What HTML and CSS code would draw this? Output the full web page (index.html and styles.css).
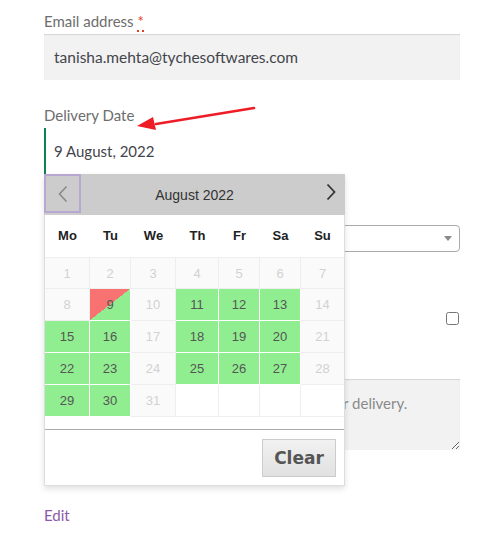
FILE: index.html
```html
<!DOCTYPE html>
<html lang="en">
<head>
    <meta charset="UTF-8">
    <title>Checkout - Delivery Date</title>
    <link rel="stylesheet" href="styles.css">
</head>

<body>
    <!-- checkout billing fields -->
    <form class="checkout">
        <p class="field field-email">
            <label class="field-label" for="email">Email address <abbr class="required" title="required">*</abbr></label>
            <input class="input-text" id="email" type="email" value="tanisha.mehta@tychesoftwares.com">
        </p>

        <div class="field field-date">
            <label class="field-label" for="delivery">Delivery Date</label>
            <input class="input-text input-date" id="delivery" type="text" value="9 August, 2022">

            <!-- datepicker popup -->
            <div class="datepicker">
                <div class="dp-header">
                    <span class="dp-prev">
                        <svg width="10" height="18" viewBox="0 0 10 18"><path d="M8.5 1.5 1.5 9l7 7.5" fill="none" stroke="#8a8a8a" stroke-width="1.6"/></svg>
                    </span>
                    <span class="dp-title">August 2022</span>
                    <span class="dp-next">
                        <svg width="10" height="18" viewBox="0 0 10 18"><path d="M1.5 1.5 8.5 9l-7 7.5" fill="none" stroke="#333" stroke-width="1.8"/></svg>
                    </span>
                </div>
                <div class="dp-grid">
                    <span class="dp-dow">Mo</span>
                    <span class="dp-dow">Tu</span>
                    <span class="dp-dow">We</span>
                    <span class="dp-dow">Th</span>
                    <span class="dp-dow">Fr</span>
                    <span class="dp-dow">Sa</span>
                    <span class="dp-dow">Su</span>

                    <span class="day off">1</span>
                    <span class="day off">2</span>
                    <span class="day off">3</span>
                    <span class="day off">4</span>
                    <span class="day off">5</span>
                    <span class="day off">6</span>
                    <span class="day off">7</span>

                    <span class="day off">8</span>
                    <span class="day booked">9</span>
                    <span class="day off">10</span>
                    <span class="day on">11</span>
                    <span class="day on">12</span>
                    <span class="day on">13</span>
                    <span class="day off">14</span>

                    <span class="day on">15</span>
                    <span class="day on">16</span>
                    <span class="day off">17</span>
                    <span class="day on">18</span>
                    <span class="day on">19</span>
                    <span class="day on">20</span>
                    <span class="day off">21</span>

                    <span class="day on">22</span>
                    <span class="day on">23</span>
                    <span class="day off">24</span>
                    <span class="day on">25</span>
                    <span class="day on">26</span>
                    <span class="day on">27</span>
                    <span class="day off">28</span>

                    <span class="day on">29</span>
                    <span class="day on">30</span>
                    <span class="day off">31</span>
                    <span class="day empty"></span>
                    <span class="day empty"></span>
                    <span class="day empty"></span>
                    <span class="day empty"></span>
                </div>
                <div class="dp-footer">
                    <button class="dp-clear" type="button">Clear</button>
                </div>
            </div>

            <!-- annotation arrow -->
            <svg class="pointer" width="130" height="30" viewBox="0 0 130 30">
                <path d="M120 2 22 18" stroke="#ee1c25" stroke-width="2.6" stroke-linecap="round"/>
                <path d="M3 20 19 11 22 24z" fill="#ee1c25"/>
            </svg>
        </div>

        <!-- fields covered by the calendar (labels not visible) -->
        <p class="field field-time">
            <span class="select-wrap">
                <select class="select" aria-label="Time Slot">
                    <option></option>
                </select>
            </span>
        </p>

        <p class="field field-ship">
            <input class="checkbox" type="checkbox" aria-label="Ship to a different address?">
        </p>

        <p class="field field-notes">
            <textarea class="input-text notes" aria-label="Order notes" placeholder="Notes about your order, e.g. special notes for delivery."></textarea>
        </p>

        <a class="edit-link" href="">Edit</a>
    </form>
</body>
</html>
```

FILE: styles.css
```css
html,
body {
    margin: 0;
    padding: 0;
    background: #fff;
}

/*checkout column*/
.checkout {
    width: 416px;
    padding: 9px 0 0 44px;
    font-family: Lato, "Liberation Sans", sans-serif;
    font-size: 16px;
    color: #43454b;
}

.field {
    margin: 0;
    position: relative;
}

.field-label {
    display: block;
    line-height: 24px;
    margin-bottom: 1px;
    color: #6d6d6d;
    font-size: 15px;
}

.required {
    color: #e2401c;
    text-decoration: none;
    border-bottom: 2px dotted #e2401c;
    line-height: 1;
}

/*inputs*/
.input-text {
    display: block;
    box-sizing: border-box;
    width: 100%;
    height: 46px;
    margin: 0;
    padding: 0 10px;
    border: 0;
    background-color: #f2f2f2;
    box-shadow: inset 0 1px 1px rgba(0, 0, 0, .125);
    font: 15.5px/24px Lato, "Liberation Sans", sans-serif;
    color: #43454b;
    outline: none;
}

.field-date {
    margin-top: 23px;
}

.input-date {
    background-color: #fff;
    box-shadow: none;
    border-left: 2px solid #0f834d;
    padding-left: 8px;
    font-size: 15px;
}

/*datepicker popup - lies over the fields below*/
.datepicker {
    position: absolute;
    top: 100%;
    left: 0;
    z-index: 10;
    width: 299px;
    background: #fff;
    border: 1px solid #ddd;
    border-top: 0;
    box-shadow: 0 3px 6px rgba(0, 0, 0, .12);
    font-family: "Liberation Sans", Arial, sans-serif;
}

.dp-header {
    display: flex;
    align-items: center;
    height: 41px;
    margin: 0 -1px;
    background-color: #ccc;
}

.dp-prev {
    display: flex;
    align-items: center;
    justify-content: center;
    box-sizing: border-box;
    width: 37px;
    height: 39px;
    align-self: flex-start;
    border: 2px solid #b9a7d3;
}

.dp-title {
    flex: 1;
    text-align: center;
    font-size: 14px;
    color: #333;
    padding-right: 18px;
}

.dp-next {
    display: flex;
    width: 19px;
    margin-bottom: 5px;
}

.dp-grid {
    display: grid;
    grid-template-columns: 45px 41px 45px 43px 41px 41px 43px;
    grid-template-rows: 42px repeat(5, 32px);
}

.dp-dow {
    line-height: 42px;
    text-align: center;
    font-weight: bold;
    font-size: 13px;
    color: #222;
}

.day {
    display: flex;
    align-items: center;
    justify-content: center;
    font-size: 13px;
    color: #555;
    border-right: 1px solid #eee;
    border-bottom: 1px solid #eee;
}

.dp-grid .day:nth-child(-n+14) {
    border-top: 1px solid #eee;
}

.day:nth-child(7n) {
    border-right: 0;
}

.day.off {
    background-color: #fafafa;
    color: #d2d2d2;
}

.day.on {
    background-color: #90ee90;
    border-color: #fff;
}

.day.booked {
    background: linear-gradient(to bottom right, #f87272 50%, #90ee90 50%);
    border-color: #fff;
}

.dp-footer {
    display: flex;
    justify-content: flex-end;
    margin-top: 12px;
    padding: 9px 8px 8px;
    border-top: 1px solid #aaa;
}

.dp-clear {
    width: 74px;
    height: 38px;
    padding: 0;
    border: 1px solid #ccc;
    background: linear-gradient(#f2f2f2, #e9e9e9 50%, #e1e1e1);
    font: bold 17px "DejaVu Sans", Verdana, sans-serif;
    color: #555;
}

/*annotation arrow*/
.pointer {
    position: absolute;
    top: 3px;
    left: 90px;
}

/*fields hidden behind the calendar*/
.field-time {
    margin-top: 51px;
}

.select-wrap {
    display: block;
    position: relative;
}

.select {
    display: block;
    width: 100%;
    height: 27px;
    margin: 0;
    padding: 0 8px;
    border: 1px solid #aaa;
    border-radius: 4px;
    background: #fff;
    appearance: none;
    font: 14px Lato, sans-serif;
    color: #444;
}

.select-wrap::after {
    content: "";
    position: absolute;
    top: 11px;
    right: 8px;
    border-top: 5px solid #888;
    border-left: 4px solid transparent;
    border-right: 4px solid transparent;
}

.field-ship {
    display: flex;
    justify-content: flex-end;
    align-items: center;
    margin-top: 54px;
    height: 24px;
}

.checkbox {
    width: 13px;
    height: 13px;
    margin: 0 1px 0 0;
}

.field-notes {
    margin-top: 49px;
}

.notes {
    height: 71px;
    padding: 12px 10px;
    resize: vertical;
    font-size: 15px;
}

.notes::placeholder {
    color: #8a8a8a;
}

.edit-link {
    display: inline-block;
    margin-top: 53px;
    line-height: 24px;
    font-size: 15px;
    color: #8b5aa8;
    text-decoration: none;
}
```
